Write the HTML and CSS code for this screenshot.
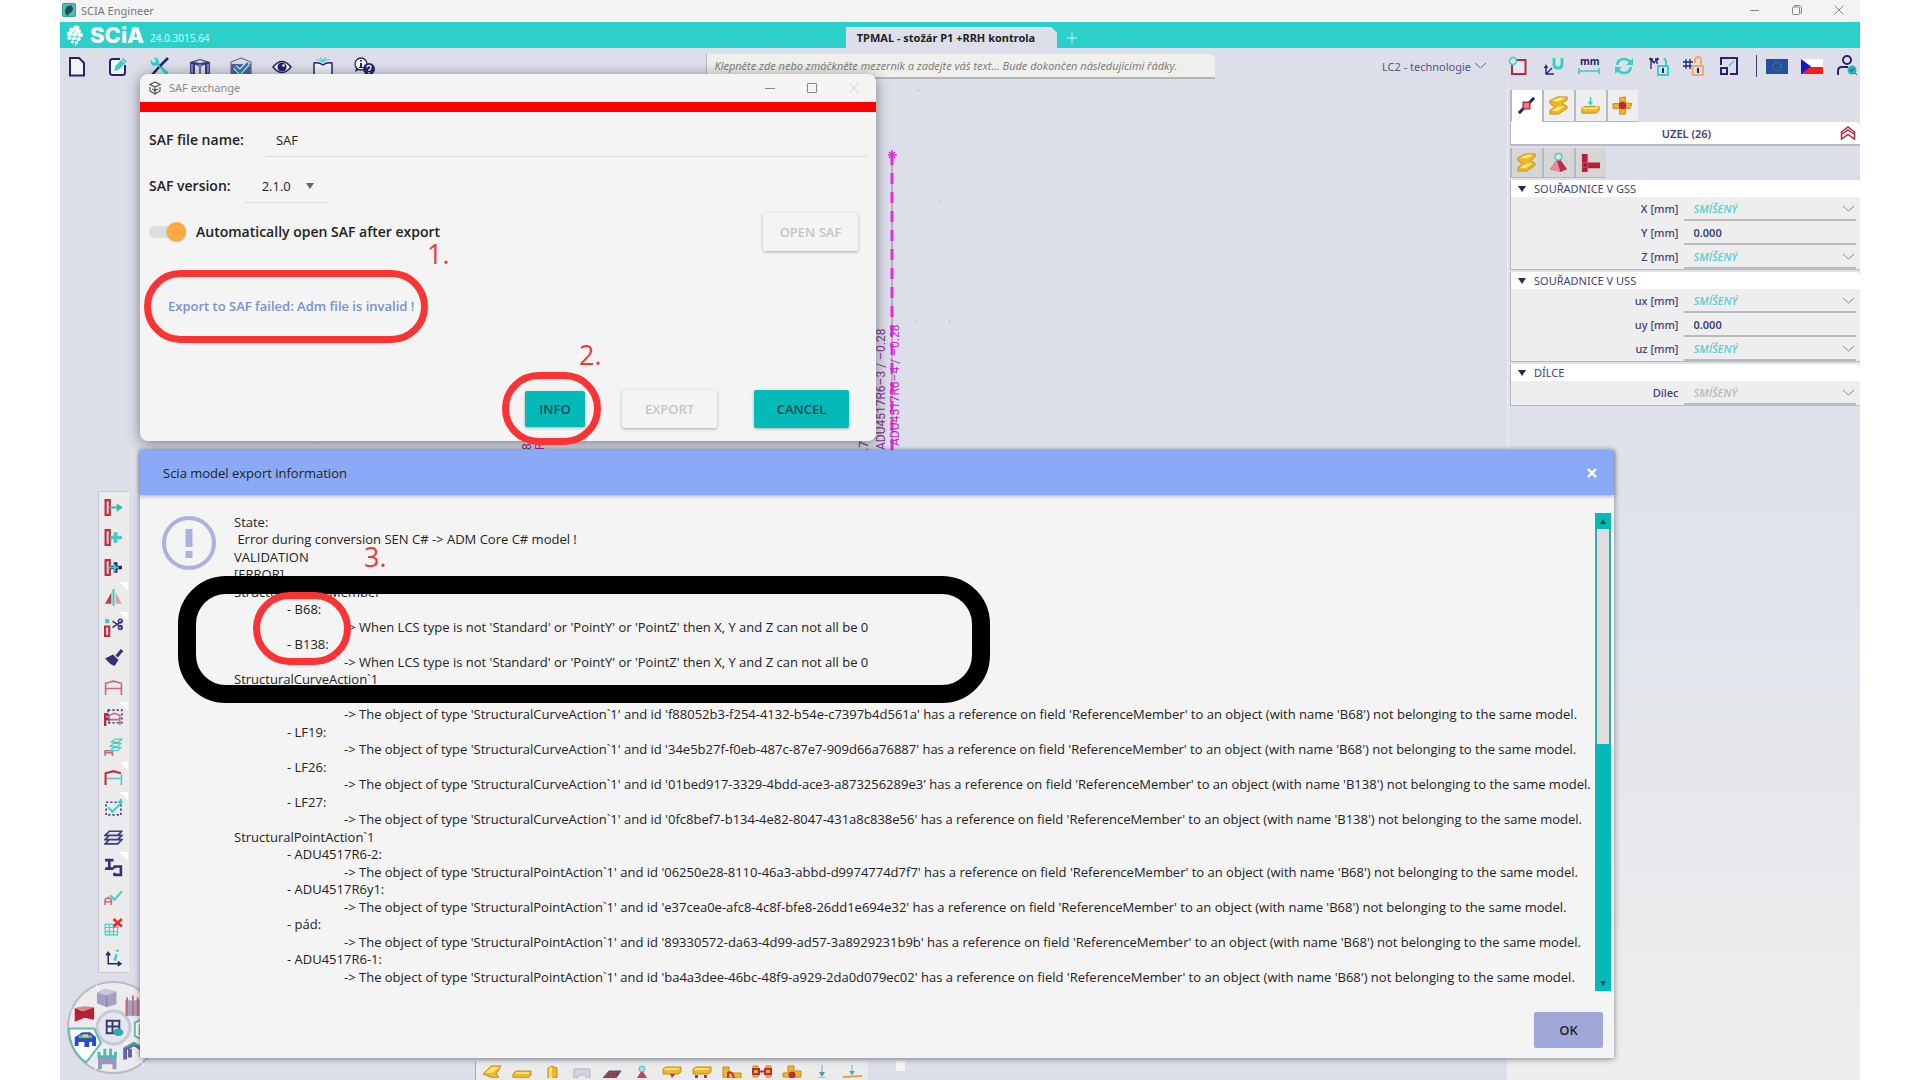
FILE: index.html
```
<!DOCTYPE html>
<html lang="cs">
    <head>
        <title>SCIA Engineer</title>
        <meta charset="UTF-8" />
        <meta name="viewport" content="width=device-width, initial-scale=1.0" />
        <link rel="stylesheet" href="styles.css">
    </head>
    <body>
        <div class="app">
            <!-- window title -->
            <header class="titlebar">
                <svg class="app-icon" viewBox="0 0 15 15"><rect width="15" height="15" rx="2" fill="#3f9a9c"/><rect x="1" y="1" width="13" height="13" rx="1" fill="#5bb5b4"/><path d="M3 8l2-4 3-1 1-1 2 2 1 3-2 3-2 1-2 3-2-2z" fill="#155458"/></svg>
                <span class="app-name">SCIA Engineer</span>
                <div class="window-buttons">
                    <button aria-label="Minimize"><svg width="10" height="10" viewBox="0 0 10 10"><path d="M0 5.500h9"/></svg></button>
                    <button aria-label="Restore"><svg width="10" height="10" viewBox="0 0 10 10"><rect x=".5" y="2" width="7" height="7.500" rx="1"/><path d="M2.500 2V.5H8l1.500 1.500v6H7.500"/></svg></button>
                    <button aria-label="Close"><svg width="10" height="10" viewBox="0 0 10 10"><path d="M.5.5l9 9m0-9l-9 9"/></svg></button>
                </div>
            </header>

            <div class="brandbar">
                <div class="brand">
                    <svg width="18" height="21" viewBox="0 0 18 21"><g fill="#fff"><ellipse cx="10.500" cy="2.500" rx="3" ry="2"/><ellipse cx="6" cy="5" rx="2.800" ry="2.200"/><ellipse cx="12" cy="6.200" rx="3" ry="2.200"/><ellipse cx="3.500" cy="8.800" rx="2.800" ry="2.200"/><ellipse cx="9" cy="9.300" rx="2.800" ry="2.200"/><ellipse cx="14.500" cy="10" rx="2.500" ry="2.200"/><ellipse cx="3.500" cy="13" rx="2.200" ry="1.900"/><ellipse cx="8" cy="13.400" rx="2.200" ry="1.900"/><ellipse cx="12.500" cy="14" rx="2.200" ry="1.900"/><ellipse cx="6.500" cy="17" rx="1.700" ry="1.400"/><ellipse cx="10.500" cy="17.500" rx="1.700" ry="1.400"/><circle cx="9.500" cy="20" r=".8"/></g></svg>
                    <b class="logo">SCiA</b>
                    <span class="version">24.0.3015.64</span>
                </div>
                <div class="tabs">
                    <button class="project-tab">TPMAL - stožár P1 +RRH kontrola</button>
                    <button class="new-tab" aria-label="New tab"><svg width="10" height="10" viewBox="0 0 10 10"><path d="M5 0v10M0 5h10" stroke="#c8f6f2"/></svg></button>
                </div>
            </div>

            <div class="toolbar">
                <nav class="main-menu">
                    <button aria-label="New"><svg viewBox="0 0 22 22"><path d="M4 2h9l5 5v12.500H4z" fill="#f2f4fb" stroke="#25246b" stroke-width="2"/></svg></button>
                    <button aria-label="Edit"><svg viewBox="0 0 22 22"><path d="M13 3H5.500Q3 3 3 5.500v11Q3 19 5.500 19h10q2.500 0 2.500-2.500V9" fill="#f2f4fb" stroke="#25246b" stroke-width="2"/><path d="M7 15l1.500-5L16 2l4 3.500-8 8z" fill="#35cfc7"/><path d="M14.500 3.500l4 3.500" stroke="#d8f3f4"/></svg></button>
                    <button aria-label="Tools"><svg viewBox="0 0 22 22"><path d="M3 4a4 4 0 0 0 6 5l8 9a2 2 0 0 0 3-2l-9-9a4 4 0 0 0-5-5l2 3-2 2z" fill="#35cfc7"/><path d="M20 2l-8 8M11 11l-7 8" stroke="#25246b" stroke-width="2.500"/></svg></button>
                    <button aria-label="Structure"><svg viewBox="0 0 22 22"><path d="M1 6l10-3 10 3v12h-5V9H6v9H1z" fill="#3c3b7d"/><path d="M5 6l6-2 6 2-6 1z" fill="#d3d6e8"/><path d="M2 8h2v9H2zM18 8h2v9h-2z" fill="#8583b5"/><path d="M7 9l4-1 4 1-3 2v7h-2v-7z" fill="#6d6ca5"/></svg></button>
                    <button aria-label="Check"><svg viewBox="0 0 22 22"><path d="M1 6l10-4 10 4v14H1z" fill="#d7d9e5" stroke="#55568b"/><path d="M1 8h20v12H1z" fill="#59609c"/><path d="M5 11l5 5 8-9" fill="none" stroke="#f1f4fa" stroke-width="5"/><path d="M5 11l5 5 8-9" fill="none" stroke="#2388a5" stroke-width="3"/></svg></button>
                    <button aria-label="View"><svg viewBox="0 0 22 22"><path d="M2 11q9-11 18 0-9 11-18 0z" fill="#f5f5fb" stroke="#25246b" stroke-width="1.500"/><circle cx="11" cy="11" r="4.500" fill="#25246b"/><circle cx="12.500" cy="9.500" r="1.300" fill="#fff"/></svg></button>
                    <button aria-label="Library"><svg viewBox="0 0 22 22"><path d="M2 19V7q5-1 9 2 4-3 9-2v12" fill="#f1f3fa" stroke="#25246b" stroke-width="1.500"/><path d="M4 4q4-1 7 2 3-3 7-2M8 1l3 4 3-4" fill="none" stroke="#4ccfc9" stroke-width="1.200"/></svg></button>
                    <button aria-label="Help"><svg viewBox="0 0 22 22"><circle cx="8" cy="8" r="6" fill="#fff" stroke="#25246b" stroke-width="1.300"/><path d="M7 7h2v4h1v1H6v-1h1zM7 4h2v1.500H7zM3 12l-1 4 4-2" fill="#25246b"/><circle cx="16" cy="13" r="6" fill="#25246b"/><path d="M14 11.500q0-2 2-2t2 2-2 2.500v1M16 16v1.500" fill="none" stroke="#fff" stroke-width="1.300"/></svg></button>
                </nav>
                <input class="command" type="text" aria-label="Command" placeholder="Klepněte zde nebo zmáčkněte mezerník a zadejte váš text... Bude dokončen následujícími řádky.">
                <div class="quick">
                    <select class="loadcase" aria-label="Load case"><option>LC2 - technologie</option></select>
                    <div class="quick-icons">
                        <button aria-label="Selection"><svg viewBox="0 0 22 22"><path d="M4 5h13.500v14H4z" fill="#e6e8f2" stroke="#b52a42" stroke-width="2"/><circle cx="5" cy="6" r="3.500" fill="#dde0ea" stroke="#35cfc7" stroke-width="1.500"/></svg></button>
                        <button aria-label="Snap"><svg viewBox="0 0 22 22"><path d="M11 3v6q0 4 4 4t4-4V3" fill="none" stroke="#35cfc7" stroke-width="3"/><path d="M3 11v8h8M3 19l6-6M1.500 13L3 10.500 4.500 13" fill="none" stroke="#25246b" stroke-width="1.400"/></svg></button>
                        <button aria-label="Units"><svg viewBox="0 0 22 22"><text x="2" y="10" class="mm-text">mm</text><path d="M1 13v6M21 13v6M1 16h20" stroke="#35cfc7" stroke-width="1.600"/></svg></button>
                        <button aria-label="Refresh"><svg viewBox="0 0 22 22"><path d="M4 10Q5 4 11 4q4 0 6 3M18 12q-1 6-7 6-4 0-6-3" fill="none" stroke="#35cfc7" stroke-width="2.500"/><path d="M20 3v7h-7zM2 19v-7h7z" fill="#35cfc7"/></svg></button>
                        <button aria-label="Member lock"><svg viewBox="0 0 22 22"><path d="M3 14V4l3 4 3-4v5M1 4h4M7 4h4" fill="none" stroke="#25246b" stroke-width="1.300"/><path d="M10 11h10v9H10zM18 11V6l-2-3" fill="none" stroke="#35cfc7" stroke-width="2"/><path d="M15 13v5" stroke="#25246b" stroke-width="2"/></svg></button>
                        <button aria-label="Grid lock"><svg viewBox="0 0 22 22"><path d="M3 4v10M7 4v10M0 7h10M0 11h9" stroke="#25246b" stroke-width="1.300"/><path d="M9.500 11h10.500v9H9.500zM12 8V5q0-3 3-3t3 3v6" fill="none" stroke="#f2ac62" stroke-width="2"/><path d="M15 13v5" stroke="#25246b" stroke-width="2"/></svg></button>
                        <button aria-label="Fit"><svg viewBox="0 0 22 22"><path d="M3 10V3h16v16h-7M3 13h6v6H3z" fill="none" stroke="#25246b" stroke-width="2"/><path d="M11 11l5-5" stroke="#35cfc7" stroke-width="1.500"/></svg></button>
                        <span class="divider"></span>
                        <button class="flag" aria-label="EU"><svg viewBox="0 0 22 15"><path d="M0 0h22v15H0z" fill="#26509a"/><circle cx="11" cy="7.500" r="4" fill="none" stroke="#7895a2" stroke-dasharray="1 1"/></svg></button>
                        <button class="flag" aria-label="Čeština"><svg viewBox="0 0 22 15"><path d="M0 0h22v8H0z" fill="#fff"/><path d="M0 8h22v7H0z" fill="#fa1b1b"/><path d="M0 0l10 7.500L0 15z" fill="#1717c9"/></svg></button>
                        <button aria-label="User"><svg viewBox="0 0 22 22"><circle cx="11" cy="5" r="4" fill="none" stroke="#25246b" stroke-width="2"/><path d="M2 20v-4q0-4 4-4h6" fill="none" stroke="#25246b" stroke-width="2"/><circle cx="16" cy="15" r="4.500" fill="#24b4b5"/><path d="M14 15l1.500 1.500L18 13M19 18l2 2" stroke="#174d66" fill="none"/></svg></button>
                    </div>
                </div>
            </div>

            <div class="workspace">
                <main class="canvas">
                    <!-- visible part of the mast and its node labels -->
                    <svg class="model" width="900" height="380">
                        <path d="M832 68v300" stroke="#8b7d91"/>
                        <path d="M832 70v298" stroke="#e32bdc" stroke-width="3" stroke-dasharray="11 8"/>
                        <path d="M828 71h9M832 66v9M829 68l6 6M835 68l-6 6" stroke="#e32bdc" stroke-width="1.500"/>
                        <g class="node-labels">
                            <text transform="translate(825 366) rotate(-90)">ADU4517R6–3 / –0.28</text>
                            <text class="hot" transform="translate(839 362) rotate(-90)">ADU4517R6–4 / –0.28</text>
                            <text transform="translate(808 367) rotate(-90)">.7</text>
                            <text transform="translate(471 366) rotate(-90)">8.</text>
                            <text class="hot" transform="translate(484 366) rotate(-90)">R6</text>
                        </g>
                        <g fill="#8e90a0"><path d="M858 6h1v1h-1zM880 117h1v1h-1zM889 237h1v1h-1zM855 237h1v1h-1zM257 358h1v1h-1zM430 356h1v1h-1z"/></g>
                    </svg>

                    <div class="side-tools">
                        <button aria-label="Move"><svg viewBox="0 0 18 18"><path d="M1.500 2h4v14h-4z" class="red-l"/><path d="M5 9h9" stroke="#36bdb7" stroke-width="2"/><path d="M12 5l6 4-6 4z" fill="#36bdb7"/></svg></button>
                        <button aria-label="Copy"><svg viewBox="0 0 18 18"><path d="M1.500 2h4v14h-4z" class="red-l"/><path d="M6 9h11M11 4v10" stroke="#45cbc3" stroke-width="3.500"/></svg></button>
                        <button aria-label="Multicopy"><svg viewBox="0 0 18 18"><path d="M1.500 2h4v14h-4z" class="red-l"/><path d="M6 9h11M11 4v10" stroke="#25246b" stroke-width="3.500"/><path d="M5 9h9M10 6v7" stroke="#45cbc3" stroke-width="2"/></svg></button>
                        <button class="more" aria-label="Mirror"><svg viewBox="0 0 18 18"><path d="M1 15L7 4v11z" fill="#b5414f"/><path d="M17 15L11 4v11z" fill="#dfa4a8"/><path d="M9 1v16" stroke="#45cbc3" stroke-width="2"/></svg></button>
                        <button class="more" aria-label="Trim"><svg viewBox="0 0 18 18"><path d="M1 8h4v9H1z" class="red-l"/><path d="M1 1h4v4H1z" fill="#45cbc3"/><path d="M8 3l9 6M8 9l9-6" stroke="#403f7d" stroke-width="1.500"/><circle cx="15.500" cy="3" r="1.800" class="navy-l"/><circle cx="15.500" cy="9" r="1.800" class="navy-l"/></svg></button>
                        <button aria-label="Paint"><svg viewBox="0 0 18 18"><path d="M17 2l-5 6" stroke="#34317a" stroke-width="3"/><path d="M1 10l8-4 5 5-4 6q-4-1-9-7z" fill="#34317a"/><path d="M9 6l5 5" stroke="#d6d7e4"/></svg></button>
                        <button aria-label="Frame"><svg viewBox="0 0 18 18"><path d="M1.500 16V5L9 3l7.500 2v11M1.500 10h15" class="rose-l"/></svg></button>
                        <button class="more" aria-label="Filter"><svg viewBox="0 0 18 18"><path d="M1 17V6h3M1 10h3" stroke="#b72c40" stroke-width="2.500" fill="none"/><path d="M5 15V7l5-2 5 2v9M5 11h10" class="rose-l"/><path d="M4 2h13v12H4z" class="navy-l" stroke-dasharray="2 2"/></svg></button>
                        <button aria-label="Frame layers"><svg viewBox="0 0 18 18"><path d="M1 17v-5h7v5M1 14h7" class="rose-l"/><path d="M7 4l3-3h7l-3 3zM6 8l3-3h7l-3 3zM6 12l3-3h7l-3 3z" fill="none" stroke="#53c9c2" stroke-width="1.200"/></svg></button>
                        <button class="more" aria-label="Current frame"><svg viewBox="0 0 18 18"><path d="M1.500 16V5L9 3l7 2" fill="none" stroke="#bf2f42" stroke-width="2"/><path d="M3 10h13.500M16.500 6v10" stroke="#53c9c2" stroke-width="1.500"/></svg></button>
                        <button class="more" aria-label="Select"><svg viewBox="0 0 18 18"><path d="M2 4h14v12H2z" class="navy-l" stroke-dasharray="2 2"/><path d="M4 9l4 4 7-7M16 1v5M13.500 3.500h4" fill="none" stroke="#35cfc7" stroke-width="1.800"/></svg></button>
                        <button aria-label="Layers"><svg viewBox="0 0 18 18"><path d="M1 7l4-4h12l-4 4zM1 11l4-4h12l-4 4zM1 15l4-4h12l-4 4z" fill="#e4e5f0" stroke="#403f7d" stroke-width="1.500"/></svg></button>
                        <button class="more" aria-label="Cross-sections"><svg viewBox="0 0 18 18"><path d="M1 2h8M1 10h8M5 2v8M10 8h6v8h-6M10 7v3M10 14v3" fill="none" stroke="#34317a" stroke-width="2.500"/></svg></button>
                        <button aria-label="Check frame"><svg viewBox="0 0 18 18"><path d="M1 16v-5l3-2 3 2v5M1 13h6" class="rose-l"/><path d="M6 7l4 4 7-8" fill="none" stroke="#53c9c2" stroke-width="2"/></svg></button>
                        <button aria-label="Delete results"><svg viewBox="0 0 18 18"><path d="M1 6h12v10H1zM1 9h12M1 13h12M5 6v10M9 6v10" fill="none" stroke="#35cfc7"/><path d="M9 1l8 7M17 1L9 8" stroke="#f12727" stroke-width="2.500"/></svg></button>
                        <button aria-label="Axes"><svg viewBox="0 0 18 18"><path d="M4 4v11h12M2 7l2-3 2 3M13 13l3 2-3 2" fill="none" stroke="#25246b" stroke-width="1.400"/><path d="M10 12l2-6M12.500 3.500l.5-2" stroke="#48c9c4" stroke-width="2.500"/></svg></button>
                    </div>

                    <!-- workstation wheel -->
                    <svg class="wheel" width="95" height="95" viewBox="0 0 98 98">
                        <circle cx="49" cy="49" r="47" fill="#ececee" stroke="#b9bac4" stroke-width="2"/>
                        <path d="M49 49L31 5M49 49L5 31M49 49l31-39M49 49l32 40M49 49L30 93" stroke="#fff"/>
                        <circle cx="49" cy="49" r="17" fill="#e3e6ef" stroke="#c6c9d5" stroke-width="3"/>
                        <path d="M3 50h26l7 15-15 20Q4 74 3 50z" fill="#fff" stroke="#66b9b4" stroke-width="2"/>
                        <path d="M32 13l8-4 12 3v13l-10 3-10-4z" fill="#a3a0c2"/><path d="M32 13l10 3 10-4-12-3z" fill="#c9c6dd"/><path d="M42 16v12" stroke="#7f7ca8"/>
                        <path d="M9 29l8 3 12-4v13l-10-2-10 4z" fill="#b91f32"/><path d="M9 29l10-2 10 1-10 4z" fill="#df7f87"/>
                        <path d="M9 68V59l8-5h8l6 5v9h-4v-4h-3v5h-5v-5h-6v4z" fill="#2c49cf"/><path d="M13 57h14v3H13z" fill="#5bc867"/><path d="M17 56h6v3h-6z" fill="#e5d443"/>
                        <path d="M33 92V80h19v12h-4v-5H37v5z" fill="#9897bd"/><path d="M34 74v7M40 71v8M46 71v8M51 74v7M33 79h19" stroke="#49bcb8" stroke-width="3"/>
                        <path d="M61 21h15v16H61z" fill="#aaa1bd"/><path d="M63 18v19M69 16v21M74 18v19" stroke="#b77383" stroke-width="2"/>
                        <path d="M61 82V71l9-5 8 5v9M66 71v9" fill="none" stroke="#63659b" stroke-width="4"/><path d="M61 70l9-5 8 4" fill="none" stroke="#43aaa8" stroke-width="2"/>
                        <path d="M88 36L71 44v14l17 7" fill="#fff" stroke="#66b9b4" stroke-width="2"/><path d="M75 46h8v11h-8z" fill="#d9949e"/>
                        <path d="M42 42h13v13H42zM42 48h13M48 42v13" fill="none" stroke="#3b3970" stroke-width="2"/><ellipse cx="54" cy="54" rx="5" ry="4" fill="#32aaa7"/>
                    </svg>

                    <div class="input-tools">
                        <button aria-label="Member"><svg viewBox="0 0 20 14"><path d="M1 10L9 2h10l-5 8 3 3-6 1z" class="gold"/><path d="M3 9l7-6h8l-8 6z" fill="#ffe270"/></svg></button>
                        <button aria-label="Beam"><svg viewBox="0 0 20 14"><path d="M1 10l3-3h15v4l-3 3H1z" class="gold"/><path d="M2 10l3-2h13l-3 2z" fill="#ffe270"/></svg></button>
                        <button aria-label="Column"><svg viewBox="0 0 20 14"><path d="M6 4l4-2 5 2v10H6z" class="gold"/><path d="M7 4l3-1v11H7z" fill="#ffe270"/></svg></button>
                        <button aria-label="Plate"><svg viewBox="0 0 20 14"><path d="M2 14V5h16v9h-3q-5-7-10 0z" fill="#d3d4e0" stroke="#aeb1c5"/></svg></button>
                        <button aria-label="Panel"><svg viewBox="0 0 20 14"><path d="M1 14l6-7h12l-5 7z" fill="#964555" stroke="#56506f"/><path d="M6 10h10" stroke="#40405e" stroke-dasharray="2 2"/></svg></button>
                        <button aria-label="Support"><svg viewBox="0 0 20 14"><path d="M5 14l5-8 5 8z" fill="#bc4357"/><circle cx="10" cy="5" r="3" fill="#9fe1e3" stroke="#5db8c0"/></svg></button>
                        <button aria-label="Beam support"><svg viewBox="0 0 20 14"><path d="M1 5l3-2h15v5l-3 2H1z" class="gold"/><path d="M2 5l3-1h13l-3 2H2z" fill="#ffe270"/><path d="M8 10h5l-3 4z" fill="#a93559"/></svg></button>
                        <button aria-label="Line support"><svg viewBox="0 0 20 14"><path d="M1 5l3-2h15v5l-3 2H1z" class="gold"/><path d="M2 5l3-1h13l-3 2H2z" fill="#ffe270"/><path d="M3 11h3v3H3zm9 0h3v3h-3z" fill="#a93559"/></svg></button>
                        <button aria-label="Hinge"><svg viewBox="0 0 20 14"><path d="M1 3h6v6h12v5H1z" class="gold"/><path d="M6 14V9q4-3 6 5" fill="none" stroke="#c52c3d" stroke-width="2"/></svg></button>
                        <button aria-label="Cross link"><svg viewBox="0 0 20 14"><path d="M1 2h5v11H1zM14 2h5v11h-5z" class="gold"/><path d="M1 5h6v5H1zM13 5h6v5h-6zM7 7.500h6" fill="none" stroke="#b92c42" stroke-width="2"/></svg></button>
                        <button aria-label="Node"><svg viewBox="0 0 20 14"><path d="M1 9h5V2h6v5h7v6H1z" class="gold"/><circle cx="10" cy="11" r="3.500" fill="#c52c2c"/></svg></button>
                        <button aria-label="Point load"><svg viewBox="0 0 20 14"><path d="M10 1v10M6 14h8" stroke="#50b7ae"/><path d="M7 8h6l-3 5z" fill="#44a5a0"/></svg></button>
                        <button aria-label="Line load"><svg viewBox="0 0 20 14"><path d="M10 1v10" stroke="#35cfc7"/><path d="M7 7h6l-3 4z" fill="#44b5a0"/><path d="M1 13l19-1" stroke="#dfa354" stroke-width="2"/></svg></button>
                    </div>
                    <span class="marker"></span>
                </main>

                <aside class="properties">
                    <div class="prop-tabs">
                        <button class="active" aria-label="Node"><svg viewBox="0 0 22 22"><path d="M3 19L19 3" stroke="#25246b" stroke-width="3"/><path d="M7.500 7.500h7v7h-7z" fill="#dd8189" stroke="#ab2f42" stroke-width="1.500"/></svg></button>
                        <button aria-label="Member"><svg viewBox="0 0 22 22"><path d="M2 6l8-4h10v3l-5 4 5 3v2l-9 6H2v-4l5-3-5-4z" class="gold"/><path d="M4 6l7-3h7l-7 4z" fill="#ffea74"/><path d="M4 16l7-4h6l-7 5z" fill="#ffea74"/></svg></button>
                        <button aria-label="Load"><svg viewBox="0 0 22 22"><path d="M2 14l3-2h15v4l-3 3H2z" class="gold"/><path d="M3 14h13l3-2" stroke="#ffe667" stroke-width="2" fill="none"/><path d="M11 2v6" stroke="#35cfc7" stroke-width="1.500"/><path d="M8 7h6l-3 4z" fill="#35cfc7"/></svg></button>
                        <button aria-label="Joint"><svg viewBox="0 0 22 22"><path d="M8 3l6-1v6l7 1-2 5h-5v6H8v-6H1V9h7z" class="gold"/><circle cx="11" cy="11" r="4" fill="#c5262c"/></svg></button>
                    </div>
                    <div class="prop-title">
                        <h2>UZEL (26)</h2>
                        <button aria-label="Collapse"><svg width="16" height="16" viewBox="0 0 16 16"><path d="M1.500 7L8 2l6.500 5v7L8 9.500 1.500 14zM1.500 9.500L8 5l6.500 4.500" fill="none" stroke="#b02b43" stroke-width="1.500"/></svg></button>
                    </div>
                    <div class="prop-tabs filters">
                        <button aria-label="Members"><svg viewBox="0 0 22 22"><path d="M2 6l8-4h10v3l-5 4 5 3v2l-9 6H2v-4l5-3-5-4z" class="gold"/><path d="M4 6l7-3h7l-7 4z" fill="#ffea74"/><path d="M4 16l7-4h6l-7 5z" fill="#ffea74"/></svg></button>
                        <button aria-label="Supports"><svg viewBox="0 0 22 22"><path d="M2 18l7-10h4l7 10-7 3z" fill="#b72e45"/><path d="M2 18L9 8l4 13z" fill="#e68d98"/><circle cx="11" cy="5" r="3.500" fill="#c6eef0" stroke="#5cc6cb" stroke-width="1.500"/></svg></button>
                        <button aria-label="Hinges"><svg viewBox="0 0 22 22"><path d="M2 2h6v9h13v6H8v4H2z" fill="#b71e39"/><path d="M3 11h5v5H3z" fill="#9c1730" stroke="#d25769"/></svg></button>
                    </div>

                    <details class="group" open>
                        <summary>SOUŘADNICE V GSS</summary>
                        <div class="field"><label for="x">X [mm]</label><select id="x"><option>SMÍŠENÝ</option></select></div>
                        <div class="field"><label for="y">Y [mm]</label><input id="y" type="text" value="0.000"></div>
                        <div class="field"><label for="z">Z [mm]</label><select id="z"><option>SMÍŠENÝ</option></select></div>
                    </details>
                    <details class="group" open>
                        <summary>SOUŘADNICE V USS</summary>
                        <div class="field"><label for="ux">ux [mm]</label><select id="ux"><option>SMÍŠENÝ</option></select></div>
                        <div class="field"><label for="uy">uy [mm]</label><input id="uy" type="text" value="0.000"></div>
                        <div class="field"><label for="uz">uz [mm]</label><select id="uz"><option>SMÍŠENÝ</option></select></div>
                    </details>
                    <details class="group" open>
                        <summary>DÍLCE</summary>
                        <div class="field"><label for="part">Dílec</label><select id="part" class="muted"><option>SMÍŠENÝ</option></select></div>
                    </details>
                </aside>
            </div>

            <!-- SAF export window -->
            <section class="saf" role="dialog" aria-label="SAF exchange">
                <header class="saf-title">
                    <svg width="12" height="14" viewBox="0 0 12 14"><path d="M6 1l5 2.500L6 6 1 3.500zM1 6v4l5 3 5-3V6M6 6v7M3 8l3 1.500L9 8" fill="none" stroke="#555" stroke-width="1.200"/></svg>
                    <span>SAF exchange</span>
                    <div class="window-buttons">
                        <button aria-label="Minimize"><svg width="10" height="10" viewBox="0 0 10 10"><path d="M0 5.500h10"/></svg></button>
                        <button aria-label="Maximize"><svg width="10" height="10" viewBox="0 0 10 10"><path d="M.5.5h9v9h-9z"/></svg></button>
                        <button aria-label="Close" disabled><svg width="10" height="10" viewBox="0 0 10 10"><path d="M.5.5l9 9m0-9l-9 9"/></svg></button>
                    </div>
                </header>
                <form class="saf-form">
                    <div class="row">
                        <label for="saf-name">SAF file name:</label>
                        <input class="line-input" id="saf-name" type="text" value="SAF">
                    </div>
                    <div class="row version-row">
                        <label for="saf-version">SAF version:</label>
                        <select class="line-select" id="saf-version"><option>2.1.0</option></select>
                    </div>
                    <div class="row open-row">
                        <input class="switch" id="auto-open" type="checkbox" checked>
                        <label for="auto-open">Automatically open SAF after export</label>
                        <button class="btn" type="button" disabled>OPEN SAF</button>
                    </div>
                    <p class="failed">Export to SAF failed: Adm file is invalid !</p>
                    <div class="actions">
                        <button class="btn primary small" type="button">INFO</button>
                        <button class="btn" type="button" disabled>EXPORT</button>
                        <button class="btn primary" type="button">CANCEL</button>
                    </div>
                </form>
            </section>

            <!-- validation report -->
            <section class="report" role="dialog" aria-label="Scia model export information">
                <header class="report-title">
                    <h1>Scia model export information</h1>
                    <button aria-label="Close"><svg width="10" height="10" viewBox="0 0 10 10"><path d="M1 1l8 8m0-8L1 9" stroke="#fff" stroke-width="2.400"/></svg></button>
                </header>
                <div class="report-body">
                    <svg class="alert-icon" width="54" height="54" viewBox="0 0 54 54"><circle cx="27" cy="27" r="25" fill="none" stroke="#acb2de" stroke-width="4"/><path d="M27 13v18M27 35v7" stroke="#acb2de" stroke-width="7"/></svg>
                    <div class="log">
                        <p>State:</p>
                        <p>&nbsp;Error during conversion SEN C# -&gt; ADM Core C# model !</p>
                        <p>VALIDATION</p>
                        <p>[ERROR]</p>
                        <p>StructuralCurveMember</p>
                        <p class="item">- B68:</p>
                        <p class="detail">-&gt; When LCS type is not 'Standard' or 'PointY' or 'PointZ' then X, Y and Z can not all be 0</p>
                        <p class="item">- B138:</p>
                        <p class="detail">-&gt; When LCS type is not 'Standard' or 'PointY' or 'PointZ' then X, Y and Z can not all be 0</p>
                        <p>StructuralCurveAction`1</p>
                        <p class="item">&nbsp;</p>
                        <p class="detail">-&gt; The object of type 'StructuralCurveAction`1' and id 'f88052b3-f254-4132-b54e-c7397b4d561a' has a reference on field 'ReferenceMember' to an object (with name 'B68') not belonging to the same model.</p>
                        <p class="item">- LF19:</p>
                        <p class="detail">-&gt; The object of type 'StructuralCurveAction`1' and id '34e5b27f-f0eb-487c-87e7-909d66a76887' has a reference on field 'ReferenceMember' to an object (with name 'B68') not belonging to the same model.</p>
                        <p class="item">- LF26:</p>
                        <p class="detail">-&gt; The object of type 'StructuralCurveAction`1' and id '01bed917-3329-4bdd-ace3-a873256289e3' has a reference on field 'ReferenceMember' to an object (with name 'B138') not belonging to the same model.</p>
                        <p class="item">- LF27:</p>
                        <p class="detail">-&gt; The object of type 'StructuralCurveAction`1' and id '0fc8bef7-b134-4e82-8047-431a8c838e56' has a reference on field 'ReferenceMember' to an object (with name 'B138') not belonging to the same model.</p>
                        <p>StructuralPointAction`1</p>
                        <p class="item">- ADU4517R6-2:</p>
                        <p class="detail">-&gt; The object of type 'StructuralPointAction`1' and id '06250e28-8110-46a3-abbd-d9974774d7f7' has a reference on field 'ReferenceMember' to an object (with name 'B68') not belonging to the same model.</p>
                        <p class="item">- ADU4517R6y1:</p>
                        <p class="detail">-&gt; The object of type 'StructuralPointAction`1' and id 'e37cea0e-afc8-4c8f-bfe8-26dd1e694e32' has a reference on field 'ReferenceMember' to an object (with name 'B68') not belonging to the same model.</p>
                        <p class="item">- pád:</p>
                        <p class="detail">-&gt; The object of type 'StructuralPointAction`1' and id '89330572-da63-4d99-ad57-3a8929231b9b' has a reference on field 'ReferenceMember' to an object (with name 'B68') not belonging to the same model.</p>
                        <p class="item">- ADU4517R6-1:</p>
                        <p class="detail">-&gt; The object of type 'StructuralPointAction`1' and id 'ba4a3dee-46bc-48f9-a929-2da0d079ec02' has a reference on field 'ReferenceMember' to an object (with name 'B68') not belonging to the same model.</p>
                    </div>
                    <div class="scrollbar">
                        <button aria-label="Scroll up"><svg width="6" height="5" viewBox="0 0 6 5"><path d="M0 5l3-5 3 5z" fill="#134b52"/></svg></button>
                        <div class="thumb"></div>
                        <button class="down" aria-label="Scroll down"><svg width="6" height="5" viewBox="0 0 6 5"><path d="M0 0l3 5 3-5z" fill="#134b52"/></svg></button>
                    </div>
                </div>
                <footer class="report-footer">
                    <button class="ok" type="button">OK</button>
                </footer>
            </section>

            <!-- hand-drawn marks over the windows -->
            <span class="ring ring-frame"></span>
            <span class="ring ring-failed"></span>
            <span class="ring ring-info"></span>
            <span class="ring ring-members"></span>
            <span class="step step-1">1.</span>
            <span class="step step-2">2.</span>
            <span class="step step-3">3.</span>
        </div>
    </body>
</html>
```
FILE: styles.css
```
* {
    box-sizing: border-box;
}
body {
    margin: 0;
    background-color: white;
    font-family: "Noto Sans", "Open Sans", sans-serif;
    font-size: 12px;
    color: #222;
}
h1, h2, p {
    margin: 0;
}
button, input, select {
    margin: 0;
    padding: 0;
    border: 0;
    background: none;
    font: inherit;
    color: inherit;
    appearance: none;
}
button {
    display: flex;
    align-items: center;
    justify-content: center;
}
svg {
    display: block;
    flex: none;
}
.gold {
    fill: #edb72a;
    stroke: #c58a1c;
}
.red-l {
    fill: #f3c9cd;
    stroke: #b9303f;
    stroke-width: 2;
}
.rose-l {
    fill: none;
    stroke: #c86b77;
    stroke-width: 1.5;
}
.navy-l {
    fill: none;
    stroke: #403f7d;
    stroke-width: 1.5;
}

.app {
    position: relative;
    display: flex;
    flex-direction: column;
    height: 100vh;
    margin: 0 60px;
    overflow: hidden;
    background-color: #dcdfea;
}

/* title and tabs */
.titlebar {
    display: flex;
    align-items: center;
    gap: 5px;
    height: 22px;
    padding: 0 16px 2px 2px;
    background-color: #f3f3f3;
}
.app-icon {
    width: 14px;
    height: 14px;
}
.app-name {
    color: #777;
    font-size: 11px;
}
.window-buttons {
    display: flex;
    gap: 32px;
    margin-left: auto;
}
.window-buttons svg {
    fill: none;
    stroke: #888;
}
.window-buttons button:disabled {
    opacity: 0.3;
}
.brandbar {
    display: grid;
    grid-template-columns: 1fr auto 1fr;
    height: 26px;
    background-color: #2bd1c9;
}
.brand {
    display: flex;
    align-items: center;
    padding-left: 6px;
    color: white;
}
.logo {
    margin: 0 6px 0 6px;
    font-family: Inter, sans-serif;
    font-size: 22px;
    font-weight: 800;
}
.version {
    padding-top: 6px;
    font-size: 10px;
    color: #d5faf7;
}
.tabs {
    display: flex;
    align-items: flex-end;
    gap: 10px;
    padding-left: 3px;
}
.project-tab {
    height: 21px;
    padding: 0 22px 0 11px;
    background-color: #dcdfea;
    clip-path: polygon(0 0, calc(100% - 6px) 0, 100% 6px, 100% 100%, 0 100%);
    font-size: 11px;
    font-weight: 700;
}
.new-tab {
    height: 21px;
}

/* main toolbar */
.toolbar {
    display: grid;
    grid-template-columns: 1fr auto 1fr;
    align-items: center;
    height: 36px;
}
.main-menu {
    display: flex;
    gap: 19px;
    padding: 2px 0 0 6px;
}
.main-menu svg, .quick-icons svg {
    width: 22px;
    height: 22px;
}
.command {
    width: 509px;
    height: 25px;
    padding: 0 8px;
    border-bottom: 2px solid #b3b5bc;
    border-left: 1px solid #b3b5bc;
    border-top-right-radius: 6px;
    background-color: #efefec;
    font-family: "Open Sans", sans-serif;
    font-size: 11px;
    font-style: italic;
}
.command::placeholder {
    color: #777;
    opacity: 1;
}
.quick {
    display: flex;
    align-items: center;
    justify-content: flex-end;
    gap: 22px;
    padding-right: 2px;
}
.loadcase {
    width: 104px;
    background: url("data:image/svg+xml,%3Csvg xmlns='http://www.w3.org/2000/svg' width='11' height='6'%3E%3Cpath d='M0 0l5.500 5L11 0' fill='none' stroke='%2367668b'/%3E%3C/svg%3E") no-repeat right center;
    color: #55537f;
    font-size: 11px;
}
.quick-icons {
    display: flex;
    align-items: center;
    gap: 13px;
}
.quick-icons .divider {
    width: 1px;
    height: 22px;
    margin: 0 -4px 0 3px;
    background-color: #3e3d67;
}
.quick-icons .flag svg {
    height: 15px;
}
.mm-text {
    font-size: 10px;
    font-weight: 700;
    fill: #25246b;
}

/* drawing area */
.workspace {
    display: flex;
    flex: 1;
    min-height: 0;
}
.canvas {
    position: relative;
    flex: 1;
    overflow: hidden;
}
.model {
    position: absolute;
    top: 0;
    left: 0;
}
.node-labels {
    font-family: Roboto, sans-serif;
    font-size: 12px;
    fill: #8c2f91;
}
.node-labels .hot {
    fill: #c41fc0;
}
.side-tools {
    position: absolute;
    top: 407px;
    left: 38px;
    display: flex;
    flex-direction: column;
    width: 31px;
    border: 1px solid #c4c6d0;
    border-right-color: #f4f4f4;
    background-color: #ebebeb;
}
.side-tools button {
    height: 30px;
}
.side-tools .more {
    background: linear-gradient(45deg, transparent 50%, #fff 50%) no-repeat right top / 8px 8px;
}
.side-tools svg {
    width: 19px;
    height: 19px;
}
.wheel {
    position: absolute;
    top: 896px;
    left: 6px;
}
.input-tools {
    position: absolute;
    top: 977px;
    left: 415px;
    display: flex;
    gap: 10px;
    height: 19px;
    padding: 0 6px 0 6px;
    border-left: 1px solid #a9abb5;
    background-color: #ebebeb;
}
.input-tools svg {
    width: 20px;
    height: 14px;
}
.marker {
    position: absolute;
    top: 977px;
    left: 836px;
    width: 9px;
    height: 10px;
    background-color: #f6f6f6;
}

/* properties */
.properties {
    width: 353px;
    padding: 6px 0 0 2px;
    border-left: 1px solid #eceef4;
    background-image: linear-gradient(#dcdfea, #e0e3ea 50%, #eeeeee);
    color: #403f75;
    font-size: 11px;
}
.prop-tabs {
    display: flex;
}
.prop-tabs button {
    width: 32px;
    height: 32px;
    padding-right: 2px;
    border-left: 2px solid #b7b9c2;
    border-bottom: 1px solid #b7b9c2;
    background-color: #eeeeee;
}
.prop-tabs .active {
    border-bottom-color: white;
    background-color: white;
}
.prop-tabs svg {
    width: 21px;
    height: 21px;
}
.prop-title {
    display: flex;
    align-items: center;
    height: 24px;
    padding-right: 4px;
    border-left: 1px solid #b7b9c2;
    border-bottom: 2px solid #b7b9c2;
    border-top-right-radius: 5px;
    background-color: white;
}
.prop-title h2 {
    flex: 1;
    padding-left: 22px;
    font-size: 11px;
    font-weight: 600;
    text-align: center;
}
.filters {
    padding: 2px 0;
}
.filters button {
    height: 30px;
    background-color: #d6d6d6;
}
.group {
    margin-bottom: 2px;
    border-left: 1px solid #b7b9c2;
    border-bottom: 1px solid #b7b9c2;
    background-color: #eeeeee;
}
.group summary {
    display: flex;
    align-items: center;
    gap: 8px;
    height: 17px;
    padding-left: 7px;
    border-top-right-radius: 5px;
    background-color: white;
}
.group summary::before {
    content: "";
    border: 4px solid transparent;
    border-top: 6px solid #2c2b4f;
    border-bottom: 0;
}
.field {
    display: grid;
    grid-template-columns: 1fr 50%;
    gap: 5px;
    height: 24px;
    padding-right: 4px;
}
.field label {
    line-height: 24px;
    font-weight: 500;
    text-align: right;
}
.field input, .field select {
    min-width: 0;
    padding: 0 0 0 10px;
    border-bottom: 2px solid #b9babd;
    font-size: 11px;
    font-weight: 600;
}
.field select {
    background: url("data:image/svg+xml,%3Csvg xmlns='http://www.w3.org/2000/svg' width='11' height='7'%3E%3Cpath d='M0 1l5.500 5L11 1' fill='none' stroke='%23888'/%3E%3C/svg%3E") no-repeat right 2px center;
    color: #5bcfcd;
    font-family: "Open Sans", sans-serif;
    font-style: italic;
}
.field .muted {
    color: #b7b8c4;
}

/* SAF exchange window */
.saf {
    position: absolute;
    top: 74px;
    left: 80px;
    width: 736px;
    border-radius: 8px;
    background-color: #f4f4f4;
    box-shadow: 0 2px 14px rgba(0, 0, 0, 0.45);
    font-family: "Open Sans", sans-serif;
    font-size: 14px;
}
.saf-title {
    display: flex;
    align-items: center;
    gap: 8px;
    height: 28px;
    padding: 0 17px 1px 9px;
    color: #888;
    font-family: "Noto Sans", sans-serif;
    font-size: 11px;
}
.saf-form {
    padding: 5px 9px 13px;
    border-top: 10px solid #fa0000;
}
.row {
    display: flex;
    align-items: center;
    height: 46px;
    font-weight: 600;
}
.row label {
    margin-bottom: 2px;
}
.line-input, .line-select {
    height: 34px;
    border-bottom: 1px solid #ddd;
    font-size: 13px;
    font-weight: 500;
}
.line-input {
    flex: 1;
    margin-left: 22px;
    padding: 0 10px;
}
.line-select {
    width: 82px;
    margin-left: 14px;
    padding-left: 17px;
    background: url("data:image/svg+xml,%3Csvg xmlns='http://www.w3.org/2000/svg' width='8' height='6'%3E%3Cpath d='M0 0h8L4 6z' fill='%23666'/%3E%3C/svg%3E") no-repeat right 13px center;
}
.switch {
    position: relative;
    width: 37px;
    height: 20px;
    margin-right: 10px;
}
.switch::before {
    content: "";
    position: absolute;
    top: 4px;
    left: 0;
    width: 30px;
    height: 12px;
    border-radius: 6px;
    background-color: #ddd;
}
.switch::after {
    content: "";
    position: absolute;
    top: 0;
    right: 0;
    width: 19px;
    height: 19px;
    border-radius: 50%;
    background-color: #fca93d;
    box-shadow: 0 1px 2px rgba(0, 0, 0, 0.3);
}
.btn {
    width: 95px;
    height: 38px;
    border-radius: 2px;
    box-shadow: 0 1px 3px rgba(0, 0, 0, 0.3);
    font-size: 13px;
    font-weight: 600;
}
.btn:disabled {
    color: #c5c5c5;
}
.btn.primary {
    background-color: #03bab9;
    color: #10494a;
}
.btn.small {
    width: 60px;
    height: 36px;
}
.open-row .btn {
    margin-left: auto;
    margin-right: 9px;
}
.failed {
    padding: 1px 0 0 19px;
    line-height: 100px;
    font-size: 13px;
    font-weight: 600;
    color: #7b90d3;
}
.actions {
    display: flex;
    align-items: center;
    justify-content: flex-end;
    gap: 37px;
    padding: 34px 18px 0 0;
}

/* export information window */
.report {
    position: absolute;
    top: 450px;
    left: 80px;
    right: 246px;
    background-color: #f4f4f4;
    box-shadow: 0 1px 6px rgba(0, 0, 0, 0.45);
    font-family: "Open Sans", sans-serif;
}
.report-title {
    display: flex;
    align-items: center;
    justify-content: space-between;
    height: 45px;
    padding: 0 17px 0 23px;
    background-color: #8aaaf7;
    box-shadow: 0 1px 4px rgba(0, 0, 0, 0.3);
}
.report-title h1 {
    font-size: 13px;
    font-weight: 500;
}
.report-body {
    display: flex;
    padding: 18px 3px 0 22px;
}
.alert-icon {
    margin: 3px 18px 0 0;
}
.log {
    flex: 1;
    min-width: 0;
    padding-bottom: 5px;
    font-size: 13px;
    font-weight: 500;
    white-space: nowrap;
}
.log p {
    line-height: 17px;
}
.log p:nth-child(odd) {
    line-height: 18px;
}
.log .item {
    padding-left: 53px;
}
.log .detail {
    padding-left: 110px;
}
.scrollbar {
    display: flex;
    flex-direction: column;
    width: 16px;
    background-color: #03bab9;
}
.scrollbar button {
    height: 16px;
}
.scrollbar .thumb {
    height: 45%;
    border: 0 solid #33abae;
    border-width: 0 2px;
    background-color: #dedede;
}
.scrollbar .down {
    margin-top: auto;
}
.report-footer {
    display: flex;
    justify-content: flex-end;
    padding: 21px 11px 10px;
}
.ok {
    width: 69px;
    height: 36px;
    border-radius: 2px;
    background-color: #a0a8da;
    font-size: 13px;
    font-weight: 600;
}

/* marks */
.ring {
    position: absolute;
    border: 7px solid #fa3434;
    border-radius: 40px;
    pointer-events: none;
}
.ring-failed {
    top: 270px;
    left: 84px;
    width: 284px;
    height: 73px;
}
.ring-info {
    top: 372px;
    left: 442px;
    width: 99px;
    height: 73px;
}
.ring-members {
    top: 592px;
    left: 193px;
    width: 98px;
    height: 73px;
}
.ring-frame {
    top: 576px;
    left: 118px;
    width: 812px;
    height: 127px;
    border: 18px solid black;
    border-radius: 48px;
}
.step {
    position: absolute;
    font-family: "Open Sans", sans-serif;
    font-size: 27px;
    line-height: 20px;
    color: #e53c40;
}
.step-1 {
    top: 244px;
    left: 367px;
}
.step-2 {
    top: 345px;
    left: 519px;
}
.step-3 {
    top: 547px;
    left: 304px;
}
```
